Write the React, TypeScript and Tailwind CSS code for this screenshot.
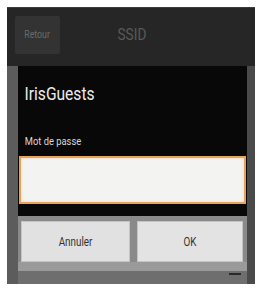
export default function App() {
  return (
    <div className="w-[257px] h-[293px] bg-white pt-[7px] pl-[7px] font-['Roboto',sans-serif]">
      {/* phone screen */}
      <div className="w-[248px] h-[277px] bg-[#626262] flex flex-col">
        {/* top bar */}
        <div className="h-[59px] bg-[#262626] border-t border-[#3a3a3a] flex items-center pl-[8px] pb-[4px]">
          <div className="w-[45px] h-[38px] bg-[#333333] rounded-[2px] flex items-center justify-center">
            <span className="text-[11px] text-[#6a6a6a] inline-block scale-x-[0.8]">Retour</span>
          </div>
          <span className="ml-[55px] text-[16px] text-[#5a5a5a] inline-block scale-x-[0.85]">SSID</span>
        </div>

        <div className="flex flex-1">
          {/* left strip */}
          <div className="w-[11px] bg-[#5c5c5c]" />

          {/* dialog */}
          <div className="w-[229px] flex flex-col">
            <div className="bg-[#080808] pt-[17px]">
              <div className="pl-[8px] text-[19px] leading-[22px] text-[#ececec] origin-left scale-x-[0.82]">IrisGuests</div>
              <div className="mt-[30px] pl-[8px] text-[11px] leading-[14px] text-[#d8d8d8] origin-left scale-x-[0.85]">Mot de passe</div>
              <div className="mt-[7px] mx-[1px] h-[48px] bg-[#f3f3f1] border-2 border-[#e6a259] shadow-[inset_0_0_3px_#f5d3a8]" />
              <div className="h-[12px]" />
            </div>
            {/* buttons */}
            <div className="bg-[#8a8a8a] pt-[5px] pl-[3px] pr-[4px] flex gap-[7px]">
              <div className="w-[109px] h-[41px] bg-[#e1e1e1] border border-[#c4c4c4] flex items-center justify-center">
                <span className="text-[12px] text-[#333333] inline-block scale-x-[0.82]">Annuler</span>
              </div>
              <div className="flex-1 h-[41px] bg-[#e3e3e3] border border-[#c4c4c4] flex items-center justify-center">
                <span className="text-[12px] text-[#333333] inline-block scale-x-[0.82]">OK</span>
              </div>
            </div>
            <div className="h-[9px] bg-[#9a9a9a]" />
            <div className="flex-1 bg-[#6e6e6e] flex justify-end pr-[6px]">
              <div className="w-[12px] h-[2px] mt-[2px] bg-[#2a2a2a]" />
            </div>
          </div>

          {/* right strip */}
          <div className="flex-1 bg-[#4a4a4a]" />
        </div>
      </div>
    </div>
  );
}
